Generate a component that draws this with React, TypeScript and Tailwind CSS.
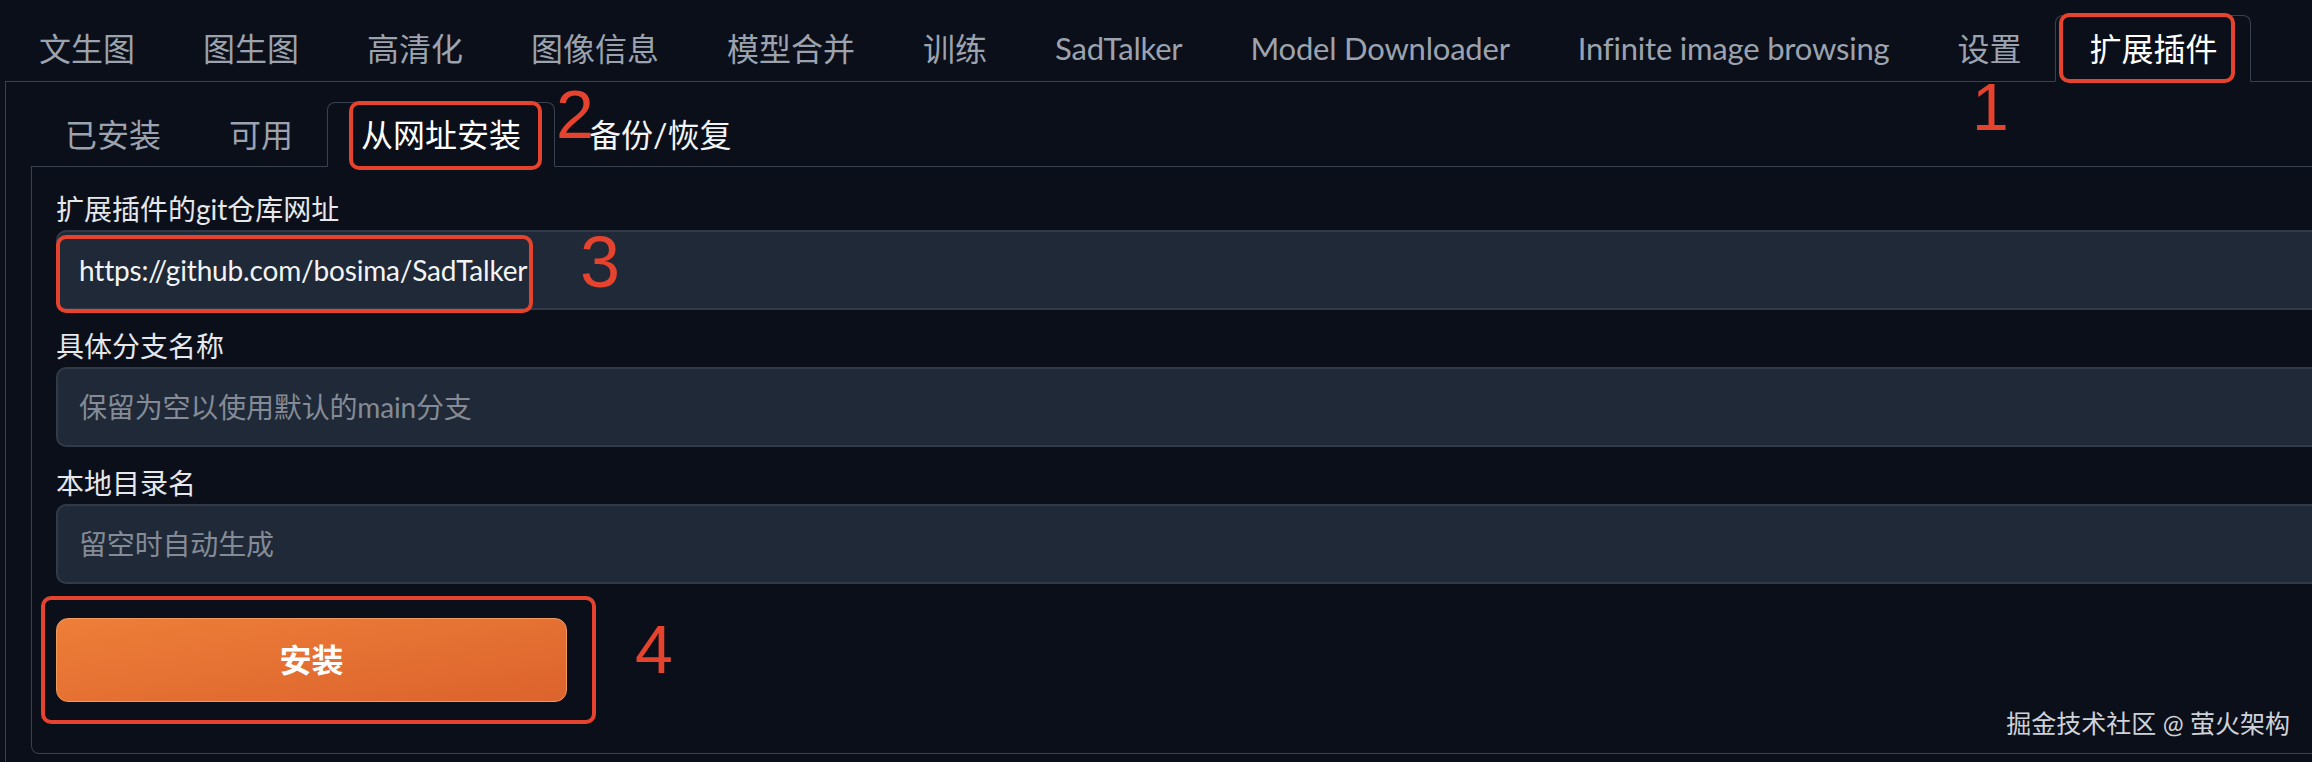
const topTabs = [
  '文生图',
  '图生图',
  '高清化',
  '图像信息',
  '模型合并',
  '训练',
  'SadTalker',
  'Model Downloader',
  'Infinite image browsing',
  '设置',
  '扩展插件',
];

const subTabs = ['已安装', '可用', '从网址安装', '备份/恢复'];

const tabBase =
  'flex -mb-px items-center whitespace-nowrap rounded-t-[8px] border px-[33px] text-[32px]';

const Field = ({
  label,
  value,
  placeholder,
}: {
  label: string;
  value?: string;
  placeholder?: string;
}) => (
  <div className="flex flex-col">
    <div className="h-[42px] leading-[42px] text-[28px] text-[#e5e7eb]">{label}</div>
    <input
      readOnly
      value={value ?? ''}
      placeholder={placeholder}
      className="h-[80px] w-full rounded-[10px] border-2 border-[#323a48] bg-[#1f2937] px-[21px] text-[28px] tracking-[-0.17px] text-[#f3f4f6] outline-none placeholder:text-[#858b96]"
    />
  </div>
);

const App = () => {
  return (
    <div className="relative h-[762px] w-[2312px] overflow-hidden bg-[#0b0f19] font-['Lato','Noto_Sans_CJK_SC',sans-serif]">
      <div className="ml-[5px] mr-[-60px] pt-[15px]">
        {/* top level tabs */}
        <div className="flex items-end border-b border-[#374151]">
          {topTabs.map((t) => {
            const active = t === '扩展插件';
            const latin = /^[A-Za-z]/.test(t);
            return (
              <div
                key={t}
                className={
                  active
                    ? `${tabBase} h-[67px] border-[#374151] border-b-[#0b0f19] bg-[#0b0f19] text-white`
                    : `${tabBase} h-[67px] border-transparent text-[#9ca3af]`
                }
              >
                {latin ? <span className="text-[31px] tracking-[-0.2px]">{t}</span> : t}
              </div>
            );
          })}
        </div>

        <div className="rounded-bl-[8px] border-l border-[#374151] pb-[40px] pl-[25px] pt-[20px]">
          {/* extension sub tabs */}
          <div className="flex items-end border-b border-[#374151]">
            {subTabs.map((t, i) => {
              const active = i === 2;
              return (
                <div
                  key={t}
                  className={
                    active
                      ? `${tabBase} h-[65px] border-[#374151] border-b-[#0b0f19] bg-[#0b0f19] text-white`
                      : i === 3
                        ? `${tabBase} h-[65px] border-transparent text-[#f3f4f6]`
                        : `${tabBase} h-[65px] border-transparent text-[#9ca3af]`
                  }
                >
                  {t}
                </div>
              );
            })}
          </div>

          <div className="flex flex-col gap-[15px] rounded-b-[8px] border-x border-b border-[#374151] pb-[51px] pl-[24px] pr-[24px] pt-[21px]">
            <Field label="扩展插件的git仓库网址" value="https://github.com/bosima/SadTalker" />
            <Field label="具体分支名称" placeholder="保留为空以使用默认的main分支" />
            <Field label="本地目录名" placeholder="留空时自动生成" />
            <button className="mt-[19px] flex h-[84px] w-[511px] items-center justify-center rounded-[12px] border border-[#f29a5e] bg-linear-to-br from-[#ee7e38] to-[#dc632d] text-[32px] font-bold text-white">
              安装
            </button>
          </div>
        </div>
      </div>

      {/* annotations drawn over the screenshot */}
      <div className="absolute left-[2059px] top-[13px] h-[70px] w-[176px] rounded-[10px] border-4 border-[#e5432d]" />
      <div className="absolute left-[349px] top-[101px] h-[69px] w-[193px] rounded-[10px] border-4 border-[#e5432d]" />
      <div className="absolute left-[56px] top-[235px] h-[78px] w-[477px] rounded-[10px] border-4 border-[#e5432d]" />
      <div className="absolute left-[41px] top-[596px] h-[128px] w-[555px] rounded-[10px] border-4 border-[#e5432d]" />

      <span className="absolute left-[1972px] top-[74px] font-['Liberation_Sans',Arial,sans-serif] text-[66px] leading-none text-[#e5432d]">1</span>
      <span className="absolute left-[556px] top-[80px] font-['Liberation_Sans',Arial,sans-serif] text-[68px] leading-none text-[#e5432d]">2</span>
      <span className="absolute left-[580px] top-[226px] font-['Liberation_Sans',Arial,sans-serif] text-[72px] leading-none text-[#e5432d]">3</span>
      <span className="absolute left-[635px] top-[615px] font-['Liberation_Sans',Arial,sans-serif] text-[68px] leading-none text-[#e5432d]">4</span>

      <span className="absolute right-[22px] top-[711px] whitespace-nowrap text-[25px] leading-none text-[#cfd2d8]">
        掘金技术社区 @ 萤火架构
      </span>
    </div>
  );
};

export default App;
